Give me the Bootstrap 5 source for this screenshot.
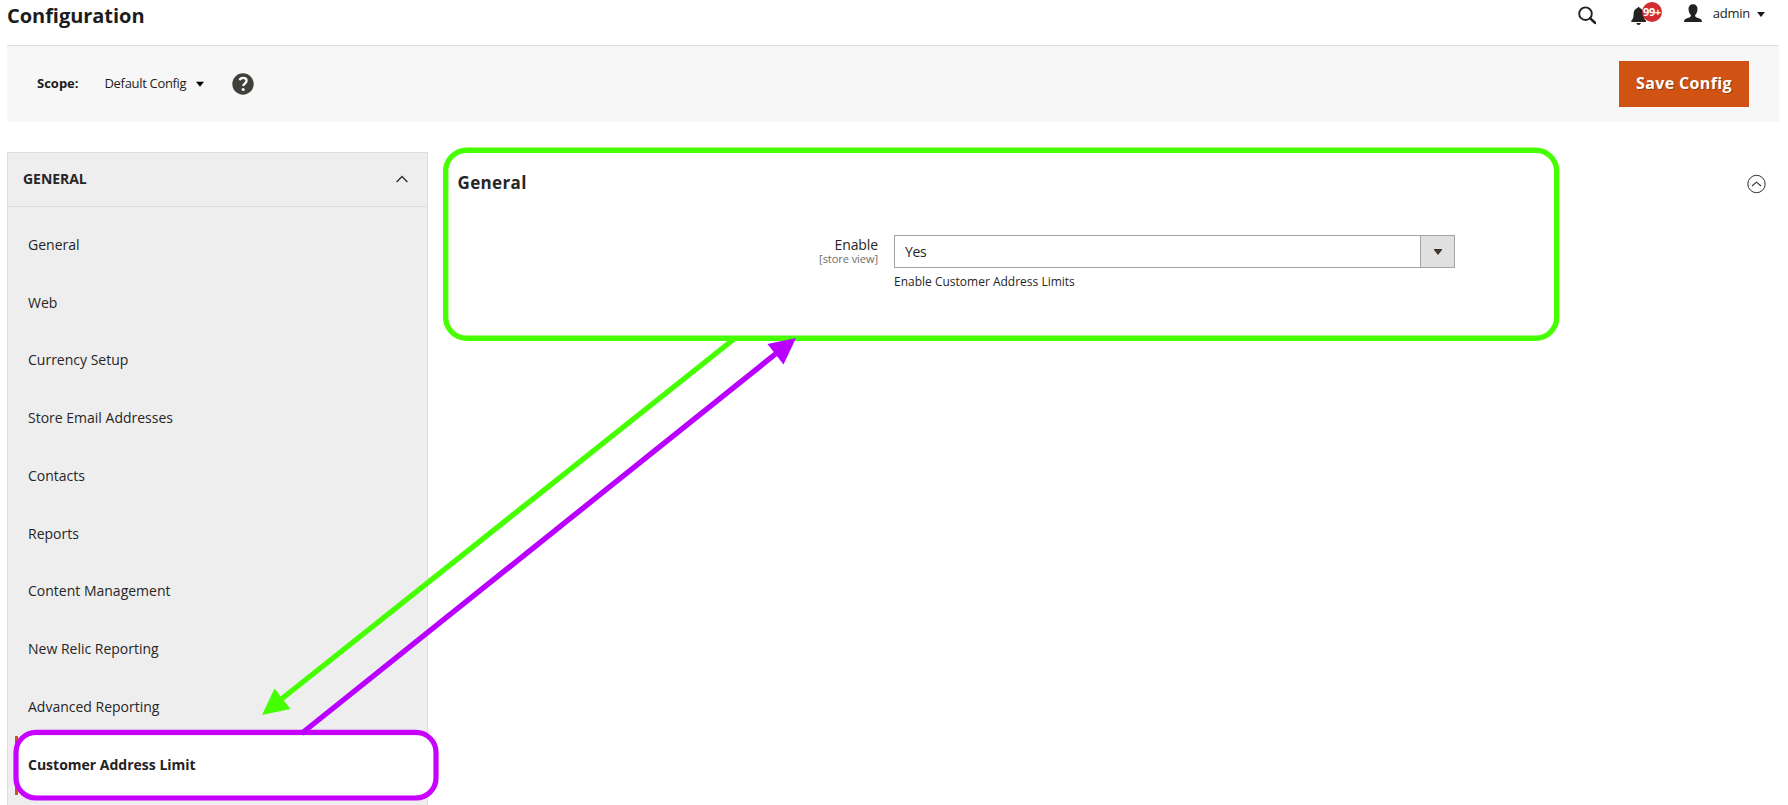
<!DOCTYPE html>
<html lang="en">
<head>
<meta charset="utf-8">
<title>Configuration</title>
<link href="https://cdn.jsdelivr.net/npm/bootstrap@5.3.0/dist/css/bootstrap.min.css" rel="stylesheet">
<style>
body{font-family:"Open Sans","Noto Sans",sans-serif;font-size:14px;line-height:20px;color:#262626;background:#fff;width:1788px;height:805px;overflow:hidden}
.page{height:805px;padding-left:7px;padding-right:9px;overflow:hidden}
.topbar{height:45px;color:#222}
.topbar h1{font-size:20px;line-height:28px;font-weight:700;margin:2px 0 0;color:#1d1d1d;letter-spacing:-.04px}
.tools{padding-right:14px;height:28px}
.tools svg{display:block}
.bell{width:31px;height:28px;margin-left:34px}
.bell .count{left:12px;top:2px;width:20px;height:20px;background:#d12c2f;color:#fff;font-size:11px;line-height:20px;font-weight:700;letter-spacing:-.5px}
.account{font-size:13px;margin-left:23px}
.user-name{padding-bottom:2px;letter-spacing:-.25px}
.scopebar{height:77px;background:#f7f7f7;border-top:1px solid #dedede;padding:0 30px;color:#1c1c1c}
.scope-label{font-size:13px;font-weight:700;width:67.500px}
.scope-label,.scope-value{padding-bottom:2px}
.scope-value{font-size:13px;letter-spacing:-.32px}
.save{width:130px;height:46px;background:#d05314;color:#fff;border:0;border-radius:0;font-size:16px;font-weight:700;letter-spacing:.35px;text-shadow:1px 1px 0 rgba(0,0,0,.3);padding:0 0 2px;line-height:42px}
.save:hover{background:#d05314;color:#fff}
.content{margin-top:30px;height:660px}
.side{width:421px;background:#eee;border:1px solid #ddd;border-bottom:0}
.side-title{height:54px;border-bottom:1px solid #ddd;padding:0 19px 1px 15px;font-weight:700;letter-spacing:-.05px}
.side .nav{padding:9.5px 0 0 7px}
.side .nav-link{height:57.8px;padding:0 0 1.4px 13px;color:#262626;line-height:20px}
.side .nav-link.active{background:#fff;border-left:3px solid #d05314;padding-left:10px;padding-bottom:0;margin-top:-.8px;font-weight:700;height:59px;color:#222;width:419px}
.panel{padding-left:29px}
.panel h2{font-size:17px;font-weight:700;line-height:24px;margin:19px 0 0 .5px;letter-spacing:.35px}
.toggle{margin:22px 13px 0 0}
.field{padding-top:40px}
.field-label{width:421px;line-height:19px}
.field-label span{font-size:11px;color:#6c6c6c;line-height:15px;margin-top:-3px;letter-spacing:-.05px}
.field-label b{font-weight:400;letter-spacing:-.1px}
.control{margin-left:16px;width:561px}
.pick{height:33px;border:1px solid #a3a3a3;border-radius:0}
.pick .arrow{width:34px;background:#e0e0e0;border-left:1px solid #a3a3a3}
.pick .value{padding-left:10px;letter-spacing:-.3px}
.hint{font-size:12px;line-height:16px;margin-top:6px}
.marks{left:0;top:0;pointer-events:none}
</style>
</head>
<body>
<div class="page">
  <header class="topbar d-flex justify-content-between align-items-start">
    <h1>Configuration</h1>
    <div class="tools d-flex align-items-center">
      <svg width="18" height="28" viewBox="0 0 18 28"><circle cx="7.500" cy="13.700" r="6.300" fill="none" stroke="#222" stroke-width="1.900"/><path d="M12.200 18.400l4.800 4.400" stroke="#222" stroke-width="2.600" stroke-linecap="round"/></svg>
      <div class="bell position-relative">
        <svg width="20" height="28" viewBox="0 0 20 28"><path d="M8.600 7c.6 0 1 .5 1 1.100 2.700.8 4 3 4 5.700 0 3.500.6 5.300 2.400 7v1.200H1.300v-1.200c1.700-1.700 2.300-3.500 2.300-7 0-2.700 1.400-4.900 4-5.700C7.600 7.500 8 7 8.600 7zM6.300 23h4.600c-.3 1.300-1.200 2-2.300 2s-2-.7-2.300-2z" fill="#222"/></svg>
        <span class="count position-absolute rounded-circle text-center">99+</span>
      </div>
      <div class="account d-flex align-items-center">
        <svg width="18" height="28" viewBox="0 0 18 28"><path d="M9 4.300c3 0 4.600 2 4.500 5-.1 2.500-1.200 4.600-2.300 5.700-.3 1.200.1 1.900 1.500 2.400 3.600 1.200 5.100 1.500 5.300 4.600H0c.2-3.100 1.700-3.400 5.300-4.600 1.400-.5 1.800-1.200 1.500-2.400-1.100-1.100-2.200-3.200-2.300-5.700-.1-3 1.500-5 4.500-5z" fill="#222"/></svg>
        <span class="user-name" style="margin-left:11px">admin</span>
        <svg style="margin-left:7px" width="8" height="28" viewBox="0 0 8 28"><path d="M0 12h8l-4 5z" fill="#1a1a1a"/></svg>
      </div>
    </div>
  </header>

  <div class="scopebar d-flex align-items-center">
    <span class="scope-label">Scope:</span>
    <span class="scope-value">Default Config</span>
    <svg style="margin-left:9.500px" width="8" height="6" viewBox="0 0 8 6"><path d="M0 .8h8L4 5.800z" fill="#000"/></svg>
    <svg style="margin-left:28px;margin-bottom:1px" width="22" height="22" viewBox="0 0 22 22"><circle cx="11" cy="11" r="10.700" fill="#41403a"/><path d="M7.700 7.300c.5-1.700 1.700-2.500 3.400-2.500 2.100 0 3.500 1.100 3.500 2.900 0 2.600-3.300 2.600-3.300 5.400" fill="none" stroke="#fff" stroke-width="2.300"/><circle cx="11.200" cy="16.600" r="1.500" fill="#fff"/></svg>
    <button class="btn save ms-auto">Save Config</button>
  </div>

  <main class="content d-flex">
    <aside class="side flex-shrink-0">
      <div class="side-title d-flex align-items-center justify-content-between">GENERAL
        <svg width="12" height="8" viewBox="0 0 12 8"><path d="M.6 7L6 1.500 11.400 7" fill="none" stroke="#303030" stroke-width="1.400"/></svg>
      </div>
      <nav class="nav flex-column flex-nowrap">
        <a class="nav-link d-flex align-items-center">General</a>
        <a class="nav-link d-flex align-items-center">Web</a>
        <a class="nav-link d-flex align-items-center">Currency Setup</a>
        <a class="nav-link d-flex align-items-center">Store Email Addresses</a>
        <a class="nav-link d-flex align-items-center">Contacts</a>
        <a class="nav-link d-flex align-items-center">Reports</a>
        <a class="nav-link d-flex align-items-center">Content Management</a>
        <a class="nav-link d-flex align-items-center">New Relic Reporting</a>
        <a class="nav-link d-flex align-items-center">Advanced Reporting</a>
        <a class="nav-link active d-flex align-items-center">Customer Address Limit</a>
      </nav>
    </aside>
    <section class="panel flex-grow-1">
      <div class="d-flex justify-content-between align-items-start">
        <h2>General</h2>
        <svg class="toggle" width="19" height="20" viewBox="0 0 19 20"><circle cx="9.500" cy="10" r="8.700" fill="none" stroke="#303030" stroke-width="1"/><path d="M5 12l4.500-3.800L14 12" fill="none" stroke="#303030" stroke-width="1.100"/></svg>
      </div>
      <div class="field d-flex align-items-start">
        <label class="field-label d-flex flex-column align-items-end"><b>Enable</b><span>[store view]</span></label>
        <div class="control">
          <div class="pick d-flex">
            <div class="value flex-grow-1 d-flex align-items-center">Yes</div>
            <div class="arrow d-flex align-items-center justify-content-center"><svg width="8" height="6" viewBox="0 0 8 6"><path d="M0 0h8v1L4 6 0 1z" fill="#41362f"/></svg></div>
          </div>
          <div class="hint">Enable Customer Address Limits</div>
        </div>
      </div>
    </section>
  </main>
</div>

<!-- Annotation overlay -->
<svg class="marks position-absolute" width="1788" height="805" viewBox="0 0 1788 805">
  <g fill="none" stroke="#46ff00" stroke-width="5.400">
    <rect x="445.700" y="150.300" width="1111" height="188" rx="21"/>
    <path d="M734 339L279 701"/>
  </g>
  <path d="M262 715l12.500-26.500 16 20.500z" fill="#46ff00"/>
  <rect x="16" y="732.400" width="420" height="65.600" rx="20" fill="none" stroke="#c800ff" stroke-width="5.200"/>
  <path d="M301.500 733.500L778 352" stroke="#b900ff" stroke-width="5.400" fill="none"/>
  <path d="M796 338l-28.500 6 16 20.500z" fill="#b900ff"/>
</svg>
<script src="https://cdn.jsdelivr.net/npm/bootstrap@5.3.0/dist/js/bootstrap.bundle.min.js"></script>
</body>
</html>
